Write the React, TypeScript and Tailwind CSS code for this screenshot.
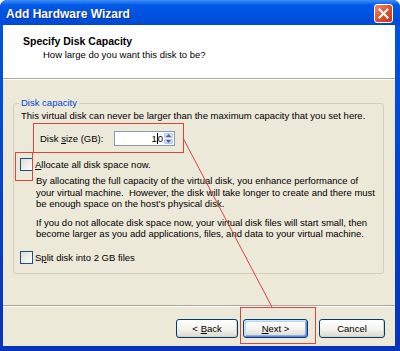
import React from 'react'

function CheckBox() {
  return <div className="w-[13px] h-[13px] shrink-0 border border-[#1c5180] bg-linear-to-br from-[#dcdcd7] to-white" />
}

function XpButton({ children, def, w }: { children: React.ReactNode; def?: boolean; w: string }) {
  return (
    <div
      className={`${w} h-[19px] flex items-center justify-center rounded-[3px] border border-[#003c74] bg-linear-to-b from-white via-[#f5f4ef] to-[#dcd9cd] text-[9.5px] leading-[12px] ${def ? 'shadow-[inset_1px_1px_0_#cee7ff,inset_-1px_-1px_0_#6982ee,inset_2px_2px_0_#bcd4f6,inset_-2px_-2px_0_#89adf2]' : 'shadow-[inset_-1px_-1px_0_#d6d0c5]'}`}
    >
      {children}
    </div>
  )
}

export default function App() {
  return (
    <div className="relative w-[400px] h-[351px] bg-white font-['Liberation_Sans',Arial,sans-serif] text-black">
      <div className="flex flex-col w-full h-full rounded-t-[7px] overflow-hidden bg-linear-to-b from-[#0055e5] to-[#0833b8]">
        {/* title bar */}
        <div className="h-[25px] shrink-0 flex items-center pt-[2px] pl-[6px] pr-[7px] bg-linear-to-b from-[#3d8ff6] via-[#0159e8] via-20% to-[#0049d6]">
          <span className="text-white font-bold text-[12px] leading-[14px] [text-shadow:1px_1px_0_#0c2a8c]">Add Hardware Wizard</span>
          <div className="ml-auto w-[19px] h-[19px] rounded-[3px] border border-white bg-linear-to-br from-[#f08a6a] via-[#e0512e] to-[#c03a1c] flex items-center justify-center">
            <svg width="11" height="11" viewBox="0 0 11 11">
              <path d="M1.5 1.5 L9.5 9.5 M9.5 1.5 L1.5 9.5" stroke="white" strokeWidth="2" strokeLinecap="square" />
            </svg>
          </div>
        </div>

        {/* body */}
        <div className="flex-1 flex flex-col pl-[3px] pr-[5px] pb-[5px]">
          <div className="flex-1 flex flex-col bg-[#ece9d8]">
            {/* header */}
            <div className="h-[54px] shrink-0 bg-white border-b border-[#aca899] pt-[10px] pl-[20px]">
              <div className="font-bold text-[10.5px] leading-[13px]">Specify Disk Capacity</div>
              <div className="pl-[20px] mt-[1px] text-[9.5px] leading-[12px]">How large do you want this disk to be?</div>
            </div>
            <div className="h-px shrink-0 bg-white" />

            {/* content */}
            <div className="flex-1">
              <fieldset className="mt-[17px] ml-[10px] mr-[11px] border border-[#d0d0bf] rounded-[3px] pl-[7px] pt-px pb-[9px] text-[9.5px]">
                <legend className="px-[2px] -ml-[2px] text-[#0046d5] leading-[12px]">Disk capacity</legend>
                <div className="leading-[12px] whitespace-nowrap">
                  This virtual disk can never be larger than the maximum capacity that you set here.
                </div>

                <div className="mt-[9px] ml-[19px] flex items-center h-[15px]">
                  <span className="w-[74px] leading-[12px]">
                    Disk <span className="underline">s</span>ize (GB):
                  </span>
                  <div className="w-[61px] h-[15px] flex border border-[#7f9db9] bg-white">
                    <div className="flex-1 flex items-center justify-end pr-px leading-[12px]">
                      1<span className="inline-block w-px h-[11px] bg-black" />0
                    </div>
                    <div className="w-[10px] flex flex-col gap-px p-px pl-0">
                      <div className="flex-1 flex items-center justify-center rounded-[1px] bg-linear-to-b from-[#dfe8fd] to-[#b8cbf8] border border-[#b4c8f6]">
                        <svg width="5" height="3" viewBox="0 0 5 3"><path d="M0 3 L2.5 0 L5 3 Z" fill="#4d6185" /></svg>
                      </div>
                      <div className="flex-1 flex items-center justify-center rounded-[1px] bg-linear-to-b from-[#dfe8fd] to-[#b8cbf8] border border-[#b4c8f6]">
                        <svg width="5" height="3" viewBox="0 0 5 3"><path d="M0 0 L2.5 3 L5 0 Z" fill="#4d6185" /></svg>
                      </div>
                    </div>
                  </div>
                </div>

                <div className="mt-[12px] -ml-px flex items-center gap-[2px]">
                  <CheckBox />
                  <span className="leading-[13px]">
                    <span className="underline">A</span>llocate all disk space now.
                  </span>
                </div>

                <div className="mt-[4px] ml-[15px] leading-[11.5px] whitespace-pre">
                  {'By allocating the full capacity of the virtual disk, you enhance performance of\nyour virtual machine.  However, the disk will take longer to create and there must\nbe enough space on the host\u2019s physical disk.'}
                </div>
                <div className="mt-[7px] ml-[15px] leading-[11.5px] whitespace-pre">
                  {'If you do not allocate disk space now, your virtual disk files will start small, then\nbecome larger as you add applications, files, and data to your virtual machine.'}
                </div>

                <div className="mt-[11px] -ml-px flex items-center gap-[2px]">
                  <CheckBox />
                  <span className="leading-[13px]">
                    S<span className="underline">p</span>lit disk into 2 GB files
                  </span>
                </div>
              </fieldset>
            </div>

            {/* footer */}
            <div className="h-px shrink-0 bg-[#aca899]" />
            <div className="h-px shrink-0 bg-white" />
            <div className="h-[39px] shrink-0 flex justify-end items-start pt-[12px] pr-[10px]">
              <XpButton w="w-[62px]">
                &lt; <span className="underline ml-[3px]">B</span>ack
              </XpButton>
              <div className="ml-[5px]">
                <XpButton w="w-[65px]" def>
                  <span className="underline">N</span>ext &gt;
                </XpButton>
              </div>
              <div className="ml-[11px]">
                <XpButton w="w-[66px]">Cancel</XpButton>
              </div>
            </div>
          </div>
        </div>
      </div>

      {/* red annotations */}
      <svg className="absolute inset-0 pointer-events-none" width="400" height="351" viewBox="0 0 400 351">
        <g stroke="#dc4444" strokeWidth="1" fill="none">
          <rect x="33.5" y="123.5" width="150" height="29" />
          <rect x="15.5" y="152.5" width="17" height="28" />
          <rect x="240.5" y="307.5" width="75" height="36" />
          <line x1="183" y1="138" x2="272" y2="307" />
        </g>
      </svg>
    </div>
  )
}
